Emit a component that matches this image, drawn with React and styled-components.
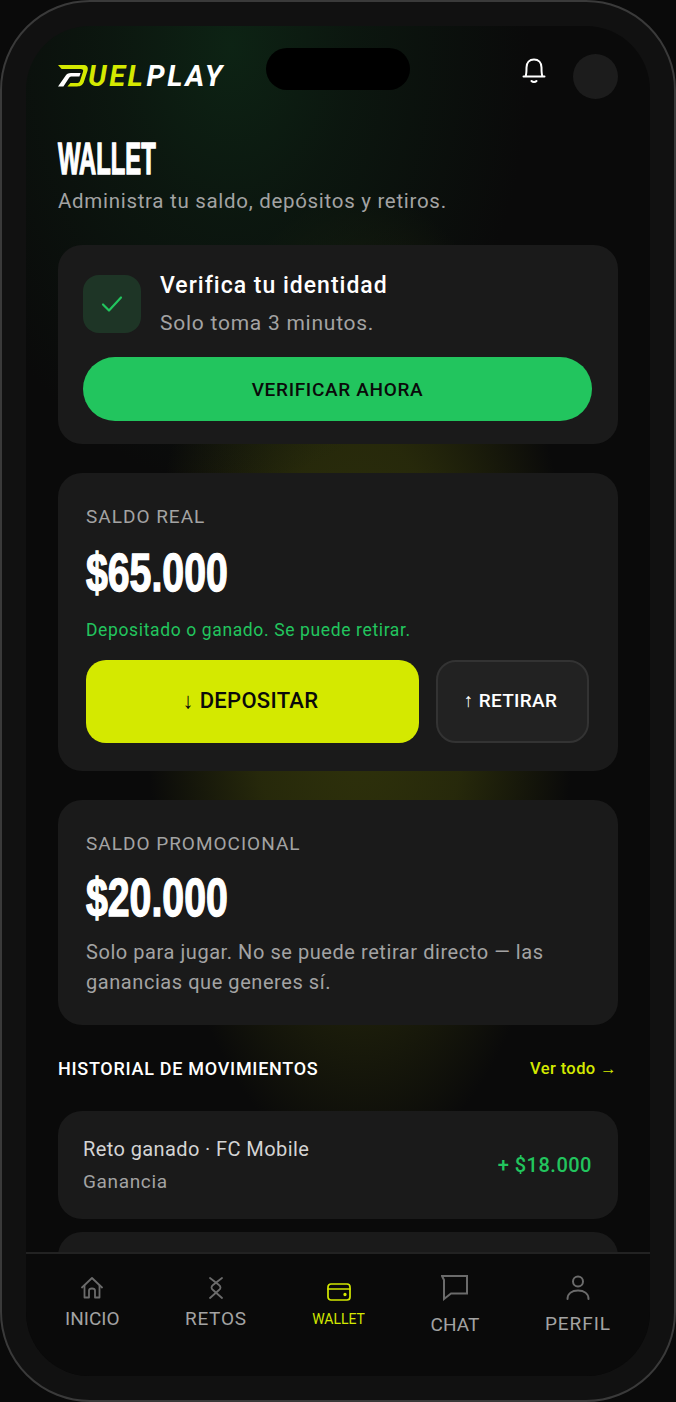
import React from 'react';
import styled, { createGlobalStyle } from 'styled-components';

const Global = createGlobalStyle`
  html, body { margin: 0; padding: 0; background: #0a0a0a; }
  * { box-sizing: border-box; }
  body { font-family: Roboto, "Liberation Sans", sans-serif; color: #fff; }
`;

const Phone = styled.div`
  width: 676px;
  height: 1402px;
  padding: 24px;
  position: relative;
  background: #111;
  border: 2px solid #3a3a3a;
  border-radius: 90px;
  overflow: hidden;
`;

const Island = styled.div`
  position: absolute;
  top: 46px;
  left: 264px;
  width: 144px;
  height: 42px;
  border-radius: 21px;
  background: #000;
  z-index: 3;
`;

const Screen = styled.div`
  height: 100%;
  border-radius: 64px;
  overflow: hidden;
  display: flex;
  flex-direction: column;
  background:
    radial-gradient(ellipse 300px 440px at 205px 20px, #0d2314 0%, rgba(13, 35, 20, 0.5) 40%, rgba(13, 35, 20, 0) 100%),
    radial-gradient(ellipse 215px 490px at 334px 654px, #30330b 0%, rgba(48, 51, 11, 0.75) 50%, rgba(48, 51, 11, 0) 100%),
    #0a0a0a;
`;

const Content = styled.main`
  flex: 1;
  min-height: 0;
  overflow: hidden;
  padding: 28px 32px 0;
`;

const Header = styled.header`
  display: flex;
  align-items: center;
  height: 45px;
`;

const Logo = styled.div`
  display: flex;
  align-items: center;
  height: 22px;
  margin-top: -1px;
  font-size: 29px;
  font-weight: 700;
  font-style: italic;
  line-height: 22px;
  letter-spacing: 2.6px;
`;

const LogoLime = styled.span`
  color: #d4e900;
  margin-left: -1px;
`;

const LogoWhite = styled.span`
  color: #fff;
  margin-left: 1px;
`;

const Bell = styled.svg`
  margin-left: auto;
  margin-right: 27px;
  margin-top: -11px;
`;

const Avatar = styled.div`
  width: 45px;
  height: 45px;
  border-radius: 50%;
  background: #1c1c1c;
`;

// no condensed display face is installed, so the wide bold is squeezed
const Title = styled.h1`
  margin: 41px 0 0;
  height: 38px;
  font-family: "Liberation Sans", sans-serif;
  font-size: 44px;
  line-height: 38px;
  font-weight: 700;
  -webkit-text-stroke: 1.4px #fff;
  transform: scaleX(0.54);
  transform-origin: left center;
`;

const Subtitle = styled.p`
  margin: 10px 0 0;
  font-size: 20.5px;
  line-height: 26px;
  letter-spacing: 0.7px;
  color: #a3a3a3;
`;

const Card = styled.section`
  background: #1a1a1a;
  border-radius: 24px;
  padding: ${(p) => p.$padding};
  margin-top: ${(p) => p.$top}px;
`;

const VerifyRow = styled.div`
  display: flex;
  align-items: center;
  gap: 19px;
`;

const VerifyIcon = styled.div`
  width: 58px;
  height: 58px;
  border-radius: 16px;
  background: #1e3526;
  display: flex;
  align-items: center;
  justify-content: center;
`;

const VerifyTitle = styled.div`
  font-size: 23px;
  line-height: 28px;
  font-weight: 500;
  letter-spacing: 1px;
`;

const VerifySub = styled.div`
  margin-top: 10px;
  font-size: 21px;
  line-height: 26px;
  letter-spacing: 0.75px;
  color: #a3a3a3;
`;

const VerifyButton = styled.button`
  display: block;
  width: 100%;
  height: 64px;
  margin-top: 21px;
  border: 0;
  border-radius: 32px;
  background: #22c55e;
  color: #0a0a0a;
  font-family: inherit;
  font-size: 19px;
  font-weight: 500;
  letter-spacing: 0.67px;
`;

const Label = styled.div`
  font-size: 19px;
  line-height: 24px;
  letter-spacing: 1px;
  color: #a3a3a3;
`;

const Amount = styled.div`
  margin-top: ${(p) => p.$top}px;
  font-family: "Liberation Sans", sans-serif;
  font-size: 53px;
  line-height: 52px;
  font-weight: 700;
  -webkit-text-stroke: 1.4px #fff;
  transform: scaleX(0.74);
  transform-origin: left center;
`;

const Note = styled.p`
  margin: 20px 0 0;
  font-size: 17.5px;
  line-height: 22px;
  letter-spacing: 0.63px;
  color: #22c55e;
`;

const Actions = styled.div`
  display: flex;
  gap: 17px;
  margin-top: 19px;
`;

const ActionButton = styled.button`
  height: 83px;
  border-radius: 20px;
  padding: 0 4px 2px 0;
  font-family: inherit;
  font-weight: 500;
  ${(p) =>
    p.$primary
      ? `flex: 1; border: 0; background: #d4e900; color: #0a0a0a; font-size: 22px; letter-spacing: 0.3px;`
      : `width: 153px; border: 2px solid #333; background: #222; color: #fff; font-size: 19px; letter-spacing: 0.3px;`}
`;

const PromoText = styled.p`
  margin: 13px 0 0;
  font-size: 20px;
  line-height: 30px;
  letter-spacing: 0.56px;
  color: #a3a3a3;
`;

const SectionHead = styled.div`
  display: flex;
  align-items: center;
  justify-content: space-between;
  margin-top: 30px;
  height: 26px;
`;

const SectionTitle = styled.h2`
  margin: 0;
  font-size: 18px;
  font-weight: 500;
  letter-spacing: 0.72px;
`;

const SeeAll = styled.a`
  margin-right: 1px;
  color: #d4e900;
  font-size: 16.5px;
  font-weight: 500;
  letter-spacing: 0.4px;
`;

const Movement = styled.div`
  height: ${(p) => p.$height}px;
  margin-top: ${(p) => p.$top}px;
  padding: 0 26px 0 25px;
  background: #1a1a1a;
  border-radius: 24px;
  display: flex;
  align-items: center;
  justify-content: space-between;
`;

const MovementTitle = styled.div`
  font-size: 20px;
  line-height: 26px;
  letter-spacing: 0.4px;
  color: #d4d4d4;
`;

const MovementSub = styled.div`
  margin-top: 8px;
  font-size: 19px;
  line-height: 24px;
  letter-spacing: 0.65px;
  color: #a3a3a3;
`;

const MovementAmount = styled.div`
  font-size: 20px;
  font-weight: 500;
  letter-spacing: 0.5px;
  color: #22c55e;
`;

const Nav = styled.nav`
  flex: none;
  height: 124px;
  border-top: 2px solid #222;
  background: #0a0a0a;
  display: flex;
  justify-content: space-between;
  align-items: flex-start;
  padding: 0 39px;
  position: relative;
  z-index: 2;
`;

const NavItem = styled.div`
  display: flex;
  flex-direction: column;
  align-items: center;
  padding-top: ${(p) => p.$top}px;
  gap: ${(p) => p.$gap}px;
  color: ${(p) => (p.$active ? '#d4e900' : '#6b6b6b')};
`;

const NavLabel = styled.span`
  color: ${(p) => (p.$active ? '#d4e900' : '#a3a3a3')};
  font-size: ${(p) => (p.$active ? 14 : 19)}px;
  line-height: 22px;
  letter-spacing: ${(p) => p.$spacing}px;
`;

const MarkBox = styled.svg`
  flex: none;
`;

const DMark = () => (
  <MarkBox width="31" height="22" viewBox="0 0 31 22">
    <path
      fill="#d4e900"
      d="M0 0H25C29 0 30.5 2 29.6 5.5L26 16.5C24.9 20 22.8 21.4 19 21.4H9.4L12.4 18H18.6C20.6 18 21.5 17.2 22.1 15.4L25 6.8C25.6 5 24.8 4 22.6 4H3.6Z"
    />
    <path
      fill="#fff"
      d="M0 21.4L7.2 11.2C8.6 9.1 10.2 8 13 8H22.6L21.4 11.4H13.6C12.4 11.4 11.7 11.9 11 12.9L5.4 21.4Z"
    />
  </MarkBox>
);

const navIcon = { fill: 'none', stroke: 'currentColor', strokeLinecap: 'round', strokeLinejoin: 'round' };

const HomeIcon = () => (
  <svg width="22" height="22" viewBox="0 0 22 22" {...navIcon} strokeWidth="1.8">
    <path d="M1 10.5L11 1L21 10.5" />
    <path d="M3.5 8.5V20.5H8V13.5C8 12 9.3 11.5 11 11.5C12.7 11.5 14 12 14 13.5V20.5H18.5V8.5" />
  </svg>
);

const RetosIcon = () => (
  <svg width="16" height="22" viewBox="0 0 16 22" {...navIcon} strokeWidth="1.8">
    <path d="M2 1L11 8C13 9.5 13 11.5 11 13L2 21" />
    <path d="M14 1L5 8C3 9.5 3 11.5 5 13L14 21" />
  </svg>
);

const WalletIcon = () => (
  <svg width="24" height="18" viewBox="0 0 24 18" {...navIcon} strokeWidth="1.7">
    <rect x="1" y="1" width="22" height="16" rx="3" />
    <path d="M1 6H23" />
    <circle cx="18" cy="11.5" r="0.8" fill="currentColor" />
  </svg>
);

const ChatIcon = () => (
  <svg width="27" height="26" viewBox="0 0 27 26" {...navIcon} strokeWidth="2" strokeLinecap="butt" strokeLinejoin="miter">
    <path d="M1 1H26V18.5H10L3 24V5Z" />
  </svg>
);

const PersonIcon = () => (
  <svg width="24" height="25" viewBox="0 0 24 25" {...navIcon} strokeWidth="2">
    <circle cx="12" cy="6.5" r="5" />
    <path d="M1.5 24C1.5 18.5 6 15.5 12 15.5C18 15.5 22.5 18.5 22.5 24" />
  </svg>
);

const navItems = [
  { label: 'INICIO', icon: <HomeIcon />, top: 23, gap: 9, spacing: 0 },
  { label: 'RETOS', icon: <RetosIcon />, top: 23, gap: 9, spacing: 0.7 },
  { label: 'WALLET', icon: <WalletIcon />, top: 29, gap: 7, spacing: 0, active: true },
  { label: 'CHAT', icon: <ChatIcon />, top: 21, gap: 13, spacing: 0.05 },
  { label: 'PERFIL', icon: <PersonIcon />, top: 21, gap: 13, spacing: 0.95 },
];

export default function App() {
  return (
    <>
      <Global />
      <Phone>
        <Island />
        <Screen>
          <Content>
            <Header>
              <Logo>
                <DMark />
                <LogoLime>UEL</LogoLime>
                <LogoWhite>PLAY</LogoWhite>
              </Logo>
              <Bell width="24" height="26" viewBox="0 0 24 26" fill="none" stroke="#fff" strokeWidth="2" strokeLinecap="round" strokeLinejoin="round">
                <path d="M1.5 18.5H22.5M3.5 18.5C4.5 16.5 4.5 14.5 4.5 9.5C4.5 4.5 7.5 1.5 12 1.5C16.5 1.5 19.5 4.5 19.5 9.5C19.5 14.5 19.5 16.5 20.5 18.5" />
                <path d="M9.5 23C10.8 24.4 13.2 24.4 14.5 23" />
              </Bell>
              <Avatar />
            </Header>

            <Title>WALLET</Title>
            <Subtitle>Administra tu saldo, depósitos y retiros.</Subtitle>

            <Card $padding="27px 26px 23px 25px" $top={31}>
              <VerifyRow>
                <VerifyIcon>
                  <svg width="22" height="18" viewBox="0 0 22 18" fill="none" stroke="#22c55e" strokeWidth="2.2" strokeLinecap="round" strokeLinejoin="round">
                    <path d="M2 9.5L8 15.5L20 2.5" />
                  </svg>
                </VerifyIcon>
                <div>
                  <VerifyTitle>Verifica tu identidad</VerifyTitle>
                  <VerifySub>Solo toma 3 minutos.</VerifySub>
                </div>
              </VerifyRow>
              <VerifyButton>VERIFICAR AHORA</VerifyButton>
            </Card>

            <Card $padding="32px 29px 28px 28px" $top={29}>
              <Label>SALDO REAL</Label>
              <Amount $top={18}>$65.000</Amount>
              <Note>Depositado o ganado. Se puede retirar.</Note>
              <Actions>
                <ActionButton $primary>↓ DEPOSITAR</ActionButton>
                <ActionButton>↑ RETIRAR</ActionButton>
              </Actions>
            </Card>

            <Card $padding="32px 29px 28px 28px" $top={29}>
              <Label>SALDO PROMOCIONAL</Label>
              <Amount $top={16}>$20.000</Amount>
              <PromoText>Solo para jugar. No se puede retirar directo — las ganancias que generes sí.</PromoText>
            </Card>

            <SectionHead>
              <SectionTitle>HISTORIAL DE MOVIMIENTOS</SectionTitle>
              <SeeAll>Ver todo →</SeeAll>
            </SectionHead>

            <Movement $height={108} $top={30}>
              <div>
                <MovementTitle>Reto ganado · FC Mobile</MovementTitle>
                <MovementSub>Ganancia</MovementSub>
              </div>
              <MovementAmount>+ $18.000</MovementAmount>
            </Movement>
            <Movement $height={108} $top={13} />
          </Content>

          <Nav>
            {navItems.map((item) => (
              <NavItem key={item.label} $top={item.top} $gap={item.gap} $active={item.active}>
                {item.icon}
                <NavLabel $active={item.active} $spacing={item.spacing}>{item.label}</NavLabel>
              </NavItem>
            ))}
          </Nav>
        </Screen>
      </Phone>
    </>
  );
}
